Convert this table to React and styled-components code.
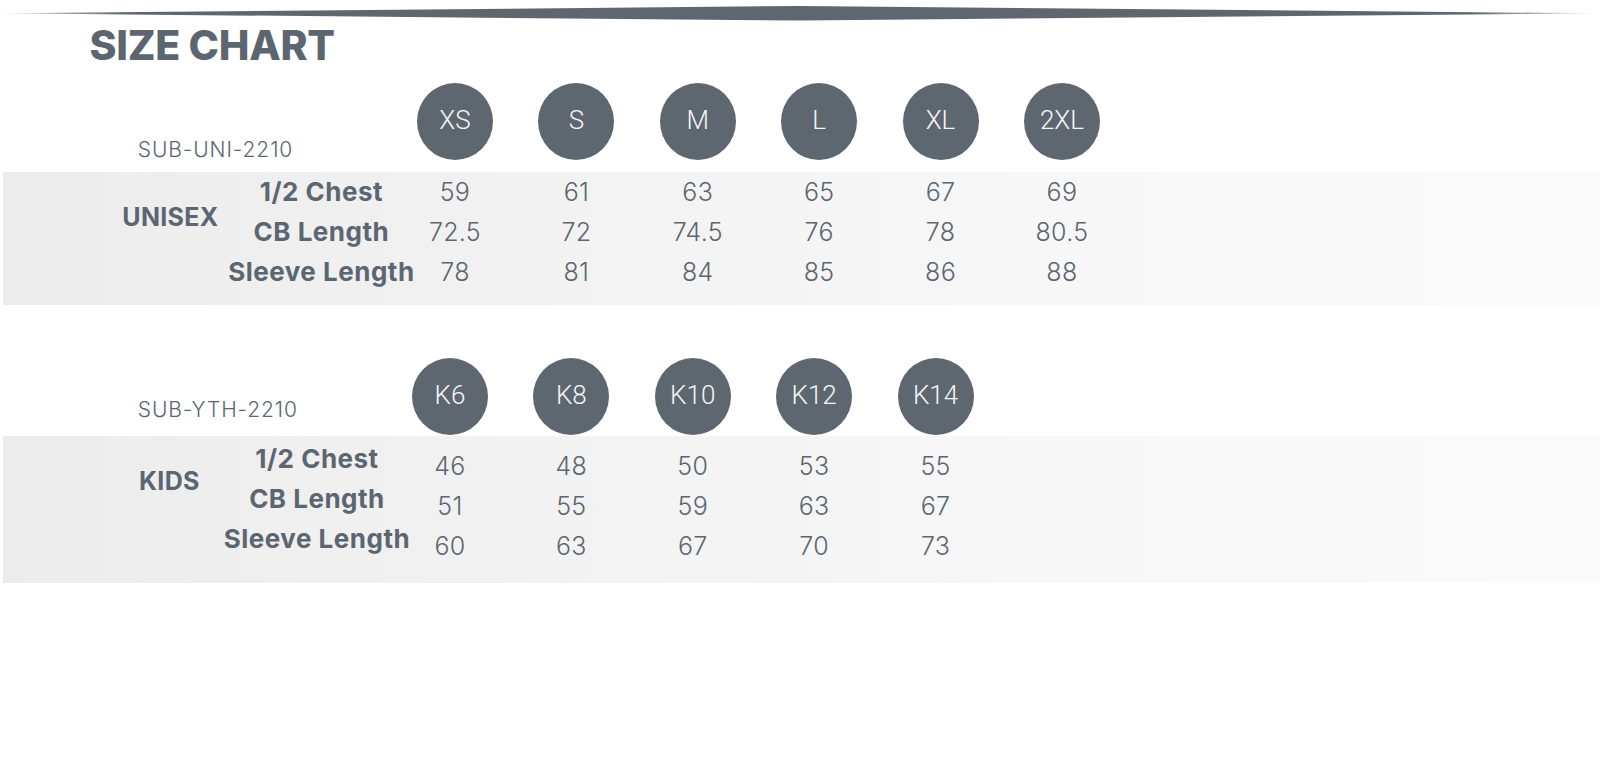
import React from 'react'
import styled, { createGlobalStyle } from 'styled-components'

const GlobalStyle = createGlobalStyle`
  html, body {
    margin: 0;
    padding: 0;
    background: #ffffff;
  }
  body {
    font-family: Inter, "Liberation Sans", sans-serif;
    color: #5c6670;
  }
`

const charts = [
  {
    code: 'SUB-UNI-2210',
    group: 'UNISEX',
    sizes: ['XS', 'S', 'M', 'L', 'XL', '2XL'],
    rows: [
      { label: '1/2 Chest', values: ['59', '61', '63', '65', '67', '69'] },
      { label: 'CB Length', values: ['72.5', '72', '74.5', '76', '78', '80.5'] },
      { label: 'Sleeve Length', values: ['78', '81', '84', '85', '86', '88'] },
    ],
    layout: {
      left: 92.3, groupCol: 156.2, labelCol: 145.8, headHeight: 104, circleGap: 11.4,
      codeGap: 10.4, codeIndent: 45.5, padTop: 0, padBottom: 13, valueShift: 0, groupShift: 5,
    },
  },
  {
    code: 'SUB-YTH-2210',
    group: 'KIDS',
    sizes: ['K6', 'K8', 'K10', 'K12', 'K14'],
    rows: [
      { label: '1/2 Chest', values: ['46', '48', '50', '53', '55'] },
      { label: 'CB Length', values: ['51', '55', '59', '63', '67'] },
      { label: 'Sleeve Length', values: ['60', '63', '67', '70', '73'] },
    ],
    layout: {
      left: 94.1, groupCol: 150.6, labelCol: 144.6, headHeight: 131.7, circleGap: 1,
      codeGap: 15.7, codeIndent: 43.7, padTop: 2.3, padBottom: 24.7, valueShift: 8.3, groupShift: 2.6,
    },
  },
]

function SizeChart() {
  return (
    <Page>
      <GlobalStyle />
      <Swoosh viewBox="0 0 1600 27" preserveAspectRatio="none">
        <defs>
          <linearGradient id="swooshFade" x1="0" x2="1" y1="0" y2="0">
            <stop offset="0" stopColor="#5e6770" stopOpacity="0.25" />
            <stop offset="0.08" stopColor="#5e6770" />
            <stop offset="0.92" stopColor="#5e6770" />
            <stop offset="1" stopColor="#5e6770" stopOpacity="0.15" />
          </linearGradient>
        </defs>
        <polygon points="0,13.3 800,6 1598,13.3 800,20.6" fill="url(#swooshFade)" />
      </Swoosh>
      <Title>SIZE CHART</Title>

      {charts.map((chart) => {
        const l = chart.layout
        const cols = `${l.groupCol}px ${l.labelCol}px repeat(${chart.sizes.length}, 121.4px)`
        return (
          <Section key={chart.code}>
            <Header $left={l.left} $cols={cols} $height={l.headHeight}>
              <Code $gap={l.codeGap} $indent={l.codeIndent}>{chart.code}</Code>
              {chart.sizes.map((s) => (
                <Bubble key={s} $gap={l.circleGap}>{s}</Bubble>
              ))}
            </Header>
            <Band $left={l.left - 3} $cols={cols} $top={l.padTop} $bottom={l.padBottom}>
              <Group $shift={l.groupShift}>{chart.group}</Group>
              {chart.rows.map((row, r) => (
                <React.Fragment key={row.label}>
                  <Measure style={{ gridRow: r + 1 }}>{row.label}</Measure>
                  {row.values.map((v, i) => (
                    <Value key={i} $shift={l.valueShift} style={{ gridRow: r + 1, gridColumn: i + 3 }}>
                      {v}
                    </Value>
                  ))}
                </React.Fragment>
              ))}
            </Band>
          </Section>
        )
      })}
    </Page>
  )
}

const Page = styled.div`
  width: 1600px;
  min-height: 782px;
  background: #ffffff;
`

const Swoosh = styled.svg`
  display: block;
  width: 1600px;
  height: 27px;
`

const Title = styled.h1`
  margin: -5.5px 0 0 89.5px;
  height: 46px;
  font-family: Inter, "Liberation Sans", sans-serif;
  font-size: 41px;
  line-height: 46px;
  font-weight: 800;
  letter-spacing: -0.3px;
  color: #5c6670;
`

const Section = styled.section`
  display: flex;
  flex-direction: column;
`

const Header = styled.div`
  display: grid;
  grid-template-columns: ${(p) => p.$cols};
  height: ${(p) => p.$height}px;
  padding-left: ${(p) => p.$left}px;
  box-sizing: border-box;
  align-items: end;
`

const Code = styled.div`
  grid-column: 1 / span 2;
  margin: 0 0 ${(p) => p.$gap}px ${(p) => p.$indent}px;
  font-size: 21px;
  line-height: 22px;
  font-weight: 300;
  letter-spacing: 0.9px;
  color: #5c6670;
  white-space: nowrap;
`

const Bubble = styled.div`
  justify-self: center;
  width: 76px;
  height: 77px;
  margin-bottom: ${(p) => p.$gap}px;
  border-radius: 50%;
  background: #5e6770;
  color: #f4f5f6;
  display: flex;
  align-items: center;
  justify-content: center;
  font-family: Roboto, "Liberation Sans", sans-serif;
  font-size: 26px;
  font-weight: 300;
  padding-bottom: 3px;
  box-sizing: border-box;
`

const Band = styled.div`
  display: grid;
  grid-template-columns: ${(p) => p.$cols};
  grid-auto-rows: 40px;
  margin-left: 3px;
  padding: ${(p) => p.$top}px 0 ${(p) => p.$bottom}px ${(p) => p.$left}px;
  background: linear-gradient(90deg, #ececec 0%, #f2f2f2 35%, #f7f7f7 65%, #fafafa 100%);
`

const Group = styled.div`
  grid-column: 1;
  grid-row: 1 / span 2;
  align-self: center;
  justify-self: center;
  transform: translateY(${(p) => p.$shift}px);
  font-size: 25px;
  font-weight: 700;
  letter-spacing: 0.3px;
  color: #5c6670;
`

const Measure = styled.div`
  grid-column: 2;
  justify-self: center;
  align-self: center;
  white-space: nowrap;
  font-size: 26px;
  font-weight: 700;
  letter-spacing: 0.5px;
  color: #5c6670;
`

const Value = styled.div`
  justify-self: center;
  align-self: center;
  transform: translateY(${(p) => p.$shift}px);
  font-size: 25px;
  font-weight: 300;
  letter-spacing: 0.3px;
  color: #5c6670;
`

export default function App() {
  return <SizeChart />
}
